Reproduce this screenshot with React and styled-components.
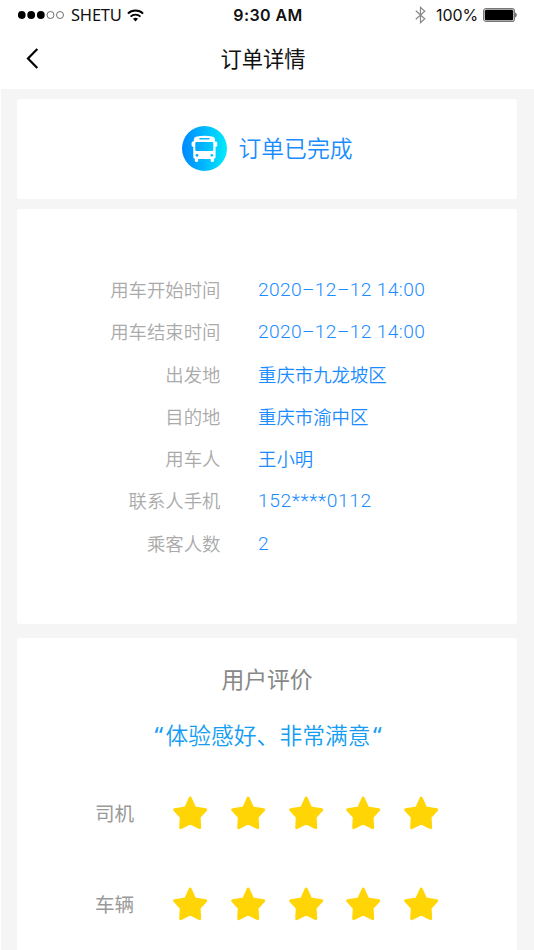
import React from 'react';
import styled, { createGlobalStyle } from 'styled-components';

const GlobalStyle = createGlobalStyle`
  * { box-sizing: border-box; }
  body { margin: 0; background: #fff; overflow: hidden; }
`;

const cjk = '"Noto Sans CJK SC", sans-serif';
const cjkLight = '"Noto Sans CJK SC DemiLight", "Noto Sans CJK SC", sans-serif';

const Screen = styled.div`
  display: flex;
  flex-direction: column;
  width: 534px;
  height: 950px;
  overflow: hidden;
  background: #fff;
  font-family: ${cjk};
`;

const StatusBar = styled.div`
  display: grid;
  grid-template-columns: 1fr auto 1fr;
  align-items: center;
  flex-shrink: 0;
  height: 30px;
  padding: 0 17px 0 18px;
  color: #111;
`;

const StatusGroup = styled.div`
  display: flex;
  align-items: center;
  justify-content: ${(p) => (p.$end ? 'flex-end' : 'flex-start')};
`;

const Carrier = styled.span`
  margin: 0 5px 0 7px;
  font: 400 16.5px/30px "Noto Sans", sans-serif;
  letter-spacing: -0.2px;
`;

const Clock = styled.span`
  padding-left: 1px;
  font: 600 16px/30px Inter, sans-serif;
  letter-spacing: 0.4px;
`;

const Percent = styled.span`
  margin: 0 5px 0 10px;
  font: 400 16px/30px Inter, sans-serif;
  letter-spacing: -0.1px;
`;

const NavBar = styled.header`
  display: grid;
  grid-template-columns: 80px 1fr 80px;
  align-items: center;
  flex-shrink: 0;
  height: 58.5px;
  padding-bottom: 2px;
`;

const BackButton = styled.button`
  display: flex;
  padding: 0 0 0 25px;
  border: 0;
  background: none;
`;

const Title = styled.h1`
  margin: 0;
  padding-right: 8px;
  text-align: center;
  font-size: 21.3px;
  font-weight: 400;
  line-height: 32px;
  color: #111;
`;

const Content = styled.main`
  flex: 1;
  min-height: 0;
  margin-left: 1px;
  padding: 10px 17px 0 16px;
  background: #f5f5f5;
`;

const Card = styled.section`
  height: ${(p) => p.$height}px;
  margin-bottom: ${(p) => p.$gap || 0}px;
  border-radius: 3px;
  background: #fff;
`;

const StatusCard = styled(Card)`
  display: flex;
  align-items: center;
  justify-content: center;
  gap: 12px;
`;

const StatusText = styled.span`
  padding-bottom: 2px;
  font-family: ${cjkLight};
  font-size: 22.8px;
  font-weight: 350;
  line-height: 34px;
  color: #1a8cff;
`;

const DetailCard = styled(Card)`
  padding-top: 59px;
`;

const DetailList = styled.dl`
  display: grid;
  grid-template-columns: 203.5px 1fr;
  grid-auto-rows: 42.25px;
  column-gap: 37.5px;
  align-items: center;
  margin: 0;
`;

const Label = styled.dt`
  text-align: right;
  font-family: ${cjkLight};
  font-size: 18.4px;
  font-weight: 350;
  line-height: 28px;
  color: #aaa;
  white-space: nowrap;
`;

const Value = styled.dd`
  margin: 0;
  padding-top: ${(p) => (p.$numeric ? 2 : 0)}px;
  font-family: ${(p) => (p.$numeric ? 'Roboto, sans-serif' : cjkLight)};
  font-size: ${(p) => (p.$numeric ? 19.2 : 18.4)}px;
  font-weight: 350;
  letter-spacing: ${(p) => p.$spacing || 0}px;
  line-height: 28px;
  color: #1a8cff;
  white-space: nowrap;
`;

const ReviewCard = styled(Card)`
  padding-top: 24px;
`;

const ReviewTitle = styled.h2`
  margin: 0;
  text-align: center;
  font-size: 22.8px;
  font-weight: 400;
  line-height: 34px;
  color: #888;
`;

const Quote = styled.p`
  margin: 21.5px 0 0;
  padding-left: 2px;
  text-align: center;
  font-family: ${cjkLight};
  font-size: 22.8px;
  font-weight: 350;
  line-height: 34px;
  color: #149df2;
`;

const QuoteMark = styled.span`
  display: inline-block;
  width: 11px;
  text-align: ${(p) => (p.$closing ? 'right' : 'left')};
  font-family: "Noto Sans", sans-serif;
  font-size: 24px;
  font-weight: 400;
  line-height: 1;
`;

const Ratings = styled.div`
  margin-top: 17px;
`;

const RatingRow = styled.div`
  display: flex;
  align-items: center;
  height: 90.5px;
  padding-left: 78px;
`;

const RatingLabel = styled.span`
  width: 78px;
  padding-bottom: 1px;
  font-size: 19.6px;
  line-height: 30px;
  color: #999;
`;

const Stars = styled.div`
  display: flex;
  gap: 22.75px;
  padding-bottom: 1px;
`;

function SignalDots() {
  return (
    <svg width="46" height="10" viewBox="0 0 46 10" fill="#000">
      <circle cx="3.7" cy="5" r="3.9" />
      <circle cx="13.2" cy="5" r="3.9" />
      <circle cx="22.8" cy="5" r="3.9" />
      <circle cx="32.5" cy="5" r="3.5" fill="none" stroke="#333" strokeWidth=".7" />
      <circle cx="42" cy="5" r="3.5" fill="none" stroke="#333" strokeWidth=".7" />
    </svg>
  );
}

function WifiIcon() {
  return (
    <svg width="17" height="13" viewBox="0 0 17 13" fill="none" stroke="#000" strokeWidth="1.9">
      <path d="M.9 4.6a11 11 0 0 1 15.2 0M3.6 7.6a7 7 0 0 1 9.8 0" />
      <path d="M6 9.8a3.8 3.8 0 0 1 5 0L8.5 12.4Z" fill="#000" stroke="none" />
    </svg>
  );
}

function BluetoothIcon() {
  return (
    <svg width="11" height="18" viewBox="0 0 11 18" fill="none" stroke="#888" strokeWidth="1.2">
      <path d="M.8 4.8 9.8 12.8 5.5 16.7V1.3L9.8 5.2.8 13.2" />
    </svg>
  );
}

function BatteryIcon() {
  return (
    <svg width="34" height="14" viewBox="0 0 34 14">
      <rect x=".6" y=".6" width="30.8" height="12.8" rx="2.5" fill="#fff" stroke="#777" strokeWidth="1.2" />
      <rect x="1.8" y="1.8" width="28.4" height="10.4" rx="1.5" fill="#000" />
      <path d="M32.3 4.5c1.7.8 1.7 4.2 0 5Z" fill="#333" />
    </svg>
  );
}

function BackIcon() {
  return (
    <svg width="14" height="21" viewBox="0 0 14 21" fill="none" stroke="#000" strokeWidth="2.2">
      <path d="M12.3 1 3 10.5l9.3 9.5" />
    </svg>
  );
}

function BusIcon() {
  return (
    <svg width="45" height="45" viewBox="0 0 45 45">
      <defs>
        <linearGradient id="bus-gradient" x1="0" x2="1">
          <stop offset="0" stopColor="#0088ff" />
          <stop offset="1" stopColor="#00eaff" />
        </linearGradient>
      </defs>
      <circle cx="22.5" cy="22.5" r="22.5" fill="url(#bus-gradient)" />
      <path
        fill="#fff"
        fillRule="evenodd"
        d="M14 10.800Q22.400 8.600 31 10.800 32.700 11.300 32.900 13.200L33.100 15.500H34Q35.300 15.700 35.300 17V19.500Q35.200 20.700 33.600 20.700V31Q33.600 32.500 32 32.800V34.500Q31.900 36 30.300 36 28.600 36 28.600 34.500V33H16.200V34.500Q16.200 36 14.500 36 12.900 36 12.800 34.500V32.800Q11.300 32.500 11.300 31V20.700Q9.700 20.700 9.600 19.500V17Q9.600 15.700 10.900 15.500H11.700L11.900 13.200Q12.200 11.300 14 10.800ZM18 12Q17.300 12 17.300 12.700 17.300 13.500 18 13.500H27Q27.700 13.500 27.700 12.700 27.700 12 27 12ZM14.300 16Q13.300 16 13.300 17V24Q13.300 25 14.300 25H30.300Q31.300 25 31.300 24V17Q31.300 16 30.300 16ZM15 27.900A1.450 1.450 0 1 0 15 30.800 1.450 1.450 0 1 0 15 27.900ZM29.800 27.900A1.450 1.450 0 1 0 29.800 30.800 1.450 1.450 0 1 0 29.800 27.900Z"
      />
    </svg>
  );
}

function StarIcon() {
  return (
    <svg width="35" height="34" viewBox="0.3 0 35 34">
      <path
        d="M17.5 2.1 22 12 33 13.8 26.4 21.1 27 31.6 17.5 27 8 31.6 8.6 21.1 2 13.8 13 12Z"
        fill="#ffd506"
        stroke="#ffd506"
        strokeWidth="3"
        strokeLinejoin="round"
      />
    </svg>
  );
}

const details = [
  { label: '用车开始时间', value: '2020–12–12 14:00', numeric: true, spacing: 0.36 },
  { label: '用车结束时间', value: '2020–12–12 14:00', numeric: true, spacing: 0.36 },
  { label: '出发地', value: '重庆市九龙坡区' },
  { label: '目的地', value: '重庆市渝中区' },
  { label: '用车人', value: '王小明' },
  { label: '联系人手机', value: '152****0112', numeric: true, spacing: 0.6 },
  { label: '乘客人数', value: '2', numeric: true },
];

const ratings = [
  { label: '司机', score: 5 },
  { label: '车辆', score: 5 },
];

export default function App() {
  return (
    <Screen>
      <GlobalStyle />
      <StatusBar>
        <StatusGroup>
          <SignalDots />
          <Carrier>SHETU</Carrier>
          <WifiIcon />
        </StatusGroup>
        <Clock>9:30 AM</Clock>
        <StatusGroup $end>
          <BluetoothIcon />
          <Percent>100%</Percent>
          <BatteryIcon />
        </StatusGroup>
      </StatusBar>
      <NavBar>
        <BackButton aria-label="返回">
          <BackIcon />
        </BackButton>
        <Title>订单详情</Title>
      </NavBar>
      <Content>
        <StatusCard $height={100.5} $gap={10}>
          <BusIcon />
          <StatusText>订单已完成</StatusText>
        </StatusCard>
        <DetailCard $height={414.5} $gap={14.5}>
          <DetailList>
            {details.map((item) => (
              <React.Fragment key={item.label}>
                <Label>{item.label}</Label>
                <Value $numeric={item.numeric} $spacing={item.spacing}>{item.value}</Value>
              </React.Fragment>
            ))}
          </DetailList>
        </DetailCard>
        <ReviewCard $height={330}>
          <ReviewTitle>用户评价</ReviewTitle>
          <Quote>
            <QuoteMark>“</QuoteMark>体验感好、非常满意<QuoteMark $closing>“</QuoteMark>
          </Quote>
          <Ratings>
            {ratings.map((item) => (
              <RatingRow key={item.label}>
                <RatingLabel>{item.label}</RatingLabel>
                <Stars>
                  {Array.from({ length: item.score }, (_, i) => (
                    <StarIcon key={i} />
                  ))}
                </Stars>
              </RatingRow>
            ))}
          </Ratings>
        </ReviewCard>
      </Content>
    </Screen>
  );
}
